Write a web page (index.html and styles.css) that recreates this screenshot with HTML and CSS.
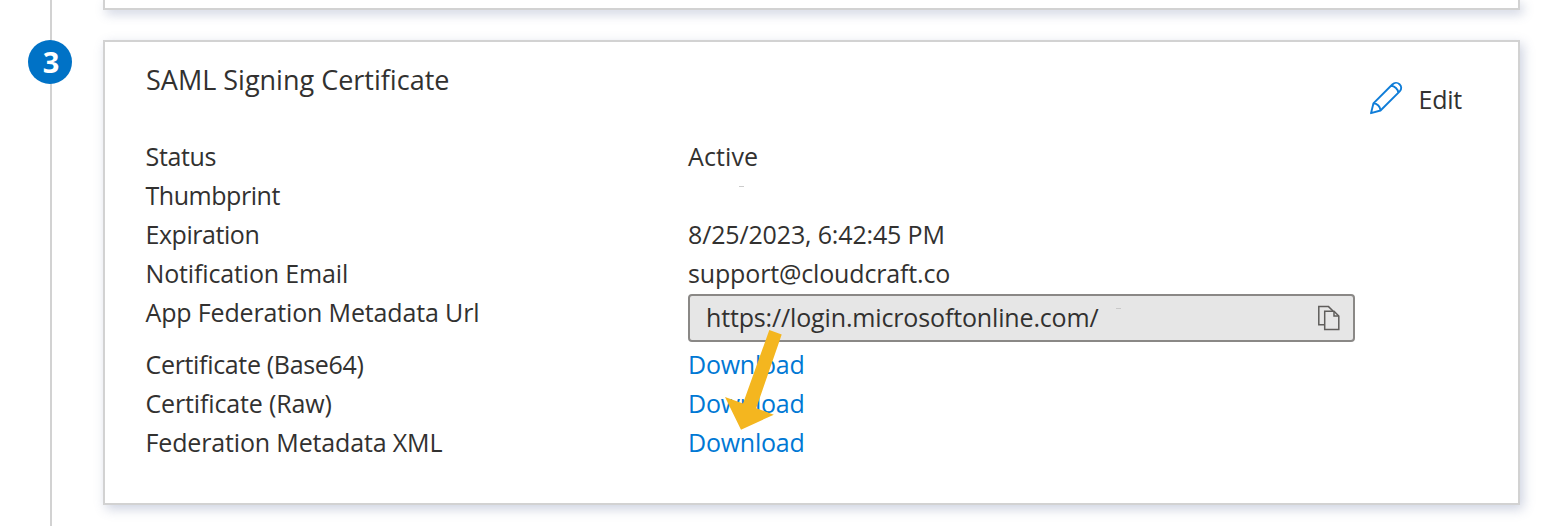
FILE: index.html
```
<!DOCTYPE html>
<html lang="en">
<head>
<meta charset="utf-8">
<title>SAML Signing Certificate</title>
<link rel="stylesheet" href="styles.css">
</head>
<body>
<div class="page">
  <aside class="rail"><span class="step">3</span></aside>
  <main class="cards">
    <section class="card card-previous"></section>
    <section class="card">
      <header class="card-header">
        <h2 class="title">SAML Signing Certificate</h2>
        <button class="edit" type="button">
          <svg class="pencil" width="34" height="34" viewBox="0 0 34 34" fill="none" stroke="#0f7dd8" stroke-width="1.9" stroke-linejoin="round"><path d="M2 32.2 4.4 22.4 23.3 3.5C25.4 1.4 28.5 1.3 30.5 3.2 32.7 5.2 32.8 8.2 30.7 10.3L11.5 29.5Z M4.4 22.4C8.2 22.4 11.4 25.6 11.5 29.5 M22 4.8C25.6 4.9 29.1 8.2 29.4 11.8"/></svg>
          <span class="edit-label">Edit</span>
        </button>
      </header>
      <dl class="details">
        <dt class="tight">Status</dt><dd class="loose">Active</dd>
        <dt class="tighter">Thumbprint</dt><dd><span class="trace"></span></dd>
        <dt class="tighter">Expiration</dt><dd>8/25/2023, 6:42:45 PM</dd>
        <dt>Notification Email</dt><dd>support@cloudcraft.co</dd>
        <dt>App Federation Metadata Url</dt>
        <dd class="url-cell">
          <div class="url-box">
            <span class="url">https://login.microsoftonline.com/</span>
            <span class="url-trace"></span>
            <svg class="copy" width="24" height="26" viewBox="0 0 24 26" fill="none" stroke="#5f5d5b" stroke-width="1.5"><path d="M7.5 19.8H1.8V1.6H11.5L16 6"/><path d="M7.7 6.2H17L21.8 11V24.4H7.7Z"/><path d="M17 6.2V11H21.8"/></svg>
          </div>
        </dd>
        <dt class="tight">Certificate (Base64)</dt><dd><a class="link">Download</a></dd>
        <dt>Certificate (Raw)</dt><dd><a class="link">Download</a></dd>
        <dt>Federation Metadata XML</dt><dd><a class="link">Download</a></dd>
      </dl>
    </section>
  </main>
  <svg class="arrow" width="50" height="102" viewBox="0 0 50 102"><path fill="#f4b61f" d="M44.3 0 56.7 4.5 31.2 78.2 48.8 84.7 16 99.7 0 67 18 73.5Z"/></svg>
</div>
</body>
</html>
```
FILE: styles.css
```
* { box-sizing: border-box; }
body { margin: 0; background: #fff; color: #323130; font: 25px/39px "Open Sans", "Noto Sans", sans-serif; }
.page { position: relative; display: flex; width: 1544px; height: 526px; overflow: hidden; }
.rail { width: 103px; padding: 40px 0 0 28px; background: linear-gradient(#d2d2d2, #d2d2d2) 50px 0 / 2px 100% no-repeat; }
.step { display: block; width: 44px; height: 44px; border-radius: 50%; background: #0072c6; color: #fff; font-weight: 700; font-size: 29px; line-height: 43px; text-align: center; padding-left: 2px; }
.cards { width: 1417px; display: flex; flex-direction: column; gap: 30px; }
.card { height: 465px; border: 2px solid #d2d2d2; background: #fff; box-shadow: 3px 4px 11px rgba(70, 90, 140, .27); padding: 18px 40px; }
.card-previous { height: 10px; padding: 0; border-top: 0; }
.card-header { display: flex; justify-content: space-between; height: 77px; }
.title { margin: 0; padding-left: 1px; font-size: 27px; font-weight: 400; line-height: 39px; }
.edit { display: flex; align-items: center; gap: 16px; height: 34px; margin: 21px 16px 0 0; padding: 0; border: 0; background: none; color: inherit; font: inherit; }
.edit-label { padding-top: 2px; letter-spacing: -.25px; }
.details { display: grid; grid-template-columns: 543px 667px; margin: 0; letter-spacing: -.15px; }
.details dt, .details dd { margin: 0; white-space: nowrap; min-height: 39px; }
.details dt { padding-left: .5px; }
.details .tight { letter-spacing: -.33px; }
.details .tighter { letter-spacing: -.45px; }
.details .loose { letter-spacing: .1px; }
.trace { display: block; width: 5px; height: 1px; margin: 10px 0 0 51px; background: #ccc; }
.url-cell { height: 52px; padding-top: 1px; }
.url-box { display: flex; align-items: center; height: 48px; padding: 0 12px 0 16px; border: 2px solid #8a8886; border-radius: 4px; background: #e6e6e6; }
.url { padding-bottom: 2px; }
.url-trace { width: 5px; height: 1px; margin: 0 auto 20px 17px; background: #c8c8c8; }
.link { color: #0078d4; letter-spacing: -.25px; }
.arrow { position: absolute; left: 725px; top: 330px; overflow: visible; }
```
